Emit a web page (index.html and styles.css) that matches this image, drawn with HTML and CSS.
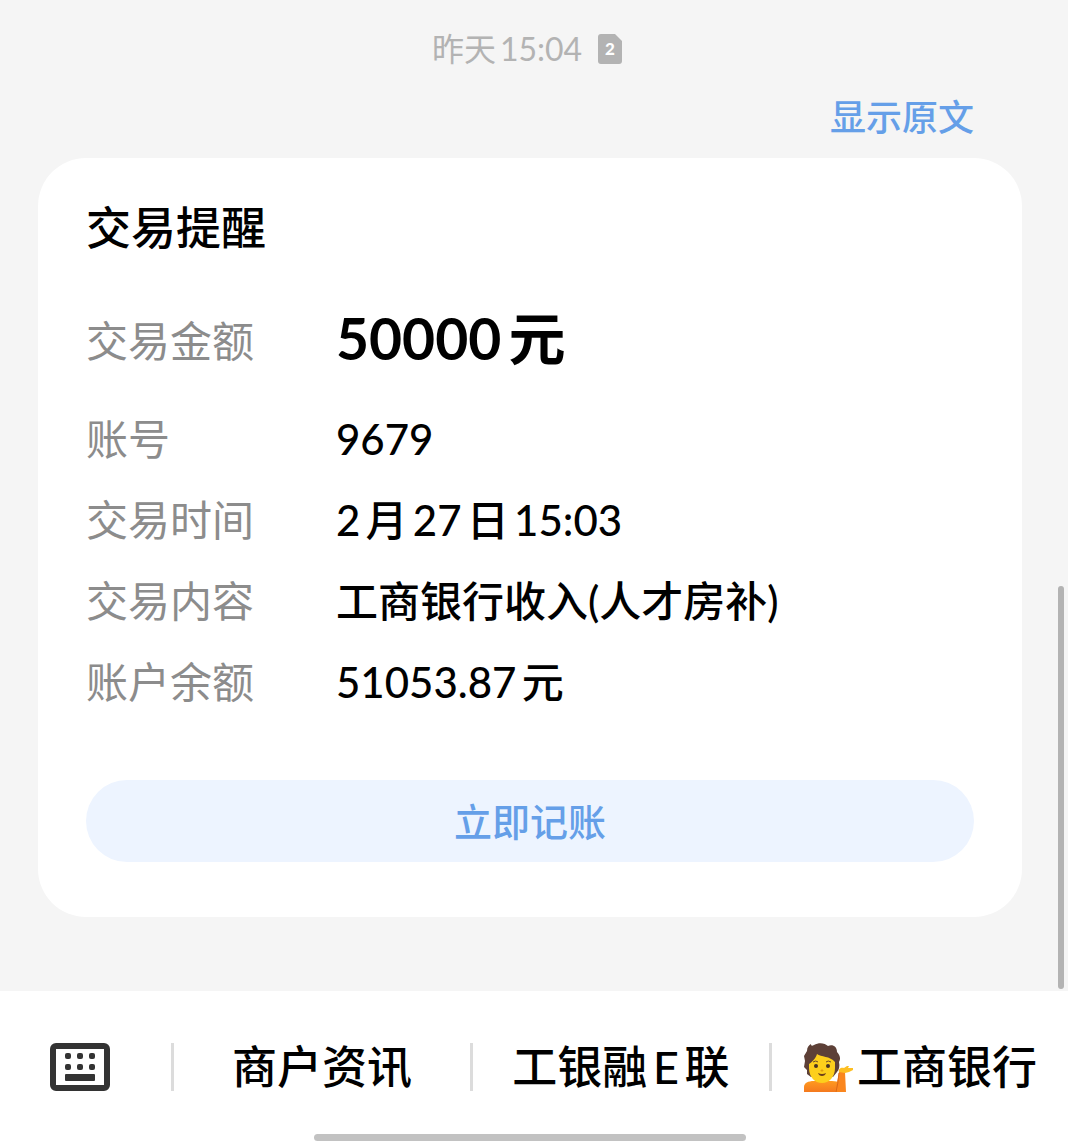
FILE: index.html
```html
<!DOCTYPE html>
<html lang="zh-CN">
<head>
    <meta charset="UTF-8">
    <meta name="viewport" content="width=device-width, initial-scale=1.0">
    <title>交易提醒</title>
    <link rel="stylesheet" href="styles.css">
</head>
<body>

    <main class="messages">
        <div class="time">
            <time>昨天15:04</time>
            <!-- SIM card badge -->
            <svg class="sim" viewBox="0 0 24 30" aria-hidden="true">
                <path d="M3 0H17L24 7V27a3 3 0 0 1-3 3H3a3 3 0 0 1-3-3V3a3 3 0 0 1 3-3z" fill="#b3b3b3"/>
                <text x="12" y="21" text-anchor="middle">2</text>
            </svg>
        </div>
        <a class="original" href="#">显示原文</a>

        <section class="card">
            <h1>交易提醒</h1>
            <dl class="details">
                <div class="row amount"><dt>交易金额</dt><dd>50000元</dd></div>
                <div class="row"><dt>账号</dt><dd>9679</dd></div>
                <div class="row"><dt>交易时间</dt><dd>2月27日15:03</dd></div>
                <div class="row"><dt>交易内容</dt><dd>工商银行收入(人才房补)</dd></div>
                <div class="row"><dt>账户余额</dt><dd>51053.87元</dd></div>
            </dl>
            <button class="record" type="button">立即记账</button>
        </section>

        <div class="scrollbar"></div>
    </main>

    <footer class="bottom">
        <nav class="menu">
            <button class="keyboard" type="button" aria-label="键盘">
                <svg viewBox="0 0 60 48">
                    <rect x="3" y="3" width="54" height="42" rx="3" fill="none" stroke="#333" stroke-width="6"/>
                    <g fill="#333">
                        <rect x="15" y="10" width="6" height="6" rx="2"/>
                        <rect x="27" y="10" width="6" height="6" rx="2"/>
                        <rect x="39" y="10" width="6" height="6" rx="2"/>
                        <rect x="15" y="21" width="6" height="6" rx="2"/>
                        <rect x="27" y="21" width="6" height="6" rx="2"/>
                        <rect x="39" y="21" width="6" height="6" rx="2"/>
                        <rect x="15" y="31" width="30" height="7" rx="1"/>
                    </g>
                </svg>
            </button>
            <button class="item" type="button">商户资讯</button>
            <button class="item" type="button">工银融E联</button>
            <button class="item" type="button">
                <svg class="person" viewBox="0 0 50 50" aria-hidden="true">
                    <defs>
                        <linearGradient id="shirt" x1="0" y1="0" x2="0" y2="1">
                            <stop offset="0" stop-color="#ff9a1f"/>
                            <stop offset="1" stop-color="#f4791f"/>
                        </linearGradient>
                    </defs>
                    <path d="M8 35L4 32 4 28 1 25 2 19 1 14 4 9C4 5 6 3 8 2 8 4 9 4 11 3 16 0 22 1 25 4 30 2 34 5 34 10 37 13 38 17 36 20 37 24 36 28 34 30L30 35z" fill="#5d4037"/>
                    <path d="M1 50V45C1 41 5 39 11 39H29C36 39 39 42 39 50z" fill="url(#shirt)"/>
                    <path d="M6 22C9 20 13 16 14 12 18 15 27 14 32 20V26C32 35 26 41 19 41 12 41 6 35 6 26z" fill="#fdcf1c"/>
                    <ellipse cx="13" cy="24" rx="2" ry="2" fill="#493324"/>
                    <ellipse cx="25" cy="24" rx="2" ry="2" fill="#493324"/>
                    <path d="M10 20Q13 18 15 20M23 20Q25 18 28 20" fill="none" stroke="#6d4c2b" stroke-width="1"/>
                    <path d="M18 28Q19 29 20 28" fill="none" stroke="#df9d10" stroke-width="2"/>
                    <path d="M15 31Q19 33 23 31Q22 34 19 34Q16 34 15 31z" fill="#6d3f1b"/>
                    <path d="M36 30L42 30 43 50H32C33 44 35 37 36 30z" fill="#fa861e"/>
                    <path d="M33 50Q35 42 36 31" fill="none" stroke="#d96818" stroke-width="1"/>
                    <path d="M36 30C35 27 38 25 41 26L44 24 46 24 45 26 50 26 50 28 46 30 42 31z" fill="#fdbf22"/>
                </svg>
                <span>工商银行</span>
            </button>
        </nav>
        <div class="home-bar"></div>
    </footer>

</body>
</html>
```
FILE: styles.css
```css
* { box-sizing: border-box; }

body {
    margin: 0;
    min-height: 100vh;
    display: flex;
    flex-direction: column;
    background-color: #f5f5f5;
    color: #000;
    font-family: Lato, "Noto Sans CJK SC", sans-serif;
    font-weight: 500;
    text-autospace: normal;
}

button {
    padding: 0;
    border: 0;
    background: none;
    color: inherit;
    font: inherit;
    cursor: pointer;
}

.messages {
    position: relative;
    flex: 1;
    display: flex;
    flex-direction: column;
    padding: 25px 46px 74px 38px;
}

.time {
    display: flex;
    justify-content: center;
    align-items: center;
    gap: 16px;
    padding-right: 6px;
    color: #b3b3b3;
    font-size: 32px;
    font-weight: 400;
    line-height: 48px;
}

.sim {
    width: 24px;
    height: 30px;
}

.sim text {
    fill: #fff;
    font-size: 17px;
    font-weight: 900;
}

.original {
    align-self: flex-end;
    margin: 20px 48px 17px 0;
    color: #659fe8;
    font-size: 36px;
    line-height: 48px;
    text-decoration: none;
}

/* Transaction card */
.card {
    padding: 40px 48px 55px;
    border-radius: 48px;
    background-color: #fff;
}

.card h1 {
    margin: 0 0 42px;
    font-size: 45px;
    font-weight: 500;
    line-height: 60px;
}

.details { margin: 0 0 58px; }

.row {
    display: flex;
    align-items: center;
    font-size: 42px;
    line-height: 82px;
    height: 81px;
}

.row dt {
    width: 250px;
    color: #8c8c8c;
    font-weight: 400;
}

.row dd { margin: 0; }

.amount { margin-bottom: 17px; }

.amount dd {
    font-size: 57px;
    font-weight: 700;
    line-height: 76px;
    padding-bottom: 6px;
}

.record {
    display: block;
    width: 100%;
    height: 82px;
    padding-bottom: 4px;
    border-radius: 41px;
    background-color: #edf4ff;
    color: #659fe8;
    font-size: 38px;
}

.scrollbar {
    position: absolute;
    right: 4px;
    bottom: 2px;
    width: 6px;
    height: 403px;
    border-radius: 3px;
    background-color: #b3b3b3;
}

/* Bottom menu */
.bottom {
    padding: 52px 0 3px;
    background-color: #fff;
}

.menu {
    display: flex;
    height: 48px;
}

.keyboard {
    width: 16%;
    padding-left: 50px;
}

.keyboard svg {
    display: block;
    width: 60px;
    height: 48px;
}

.item {
    flex: 1;
    display: flex;
    justify-content: center;
    align-items: center;
    gap: 4px;
    border-left: 3px solid #dcdcdc;
    font-size: 45px;
    line-height: 48px;
    white-space: nowrap;
}

.person {
    width: 50px;
    height: 50px;
}

.home-bar {
    width: 432px;
    max-width: 60%;
    height: 7px;
    margin: 43px auto 0 calc(50% - 220px);
    border-radius: 4px;
    background-color: #c2c2c2;
}
```
